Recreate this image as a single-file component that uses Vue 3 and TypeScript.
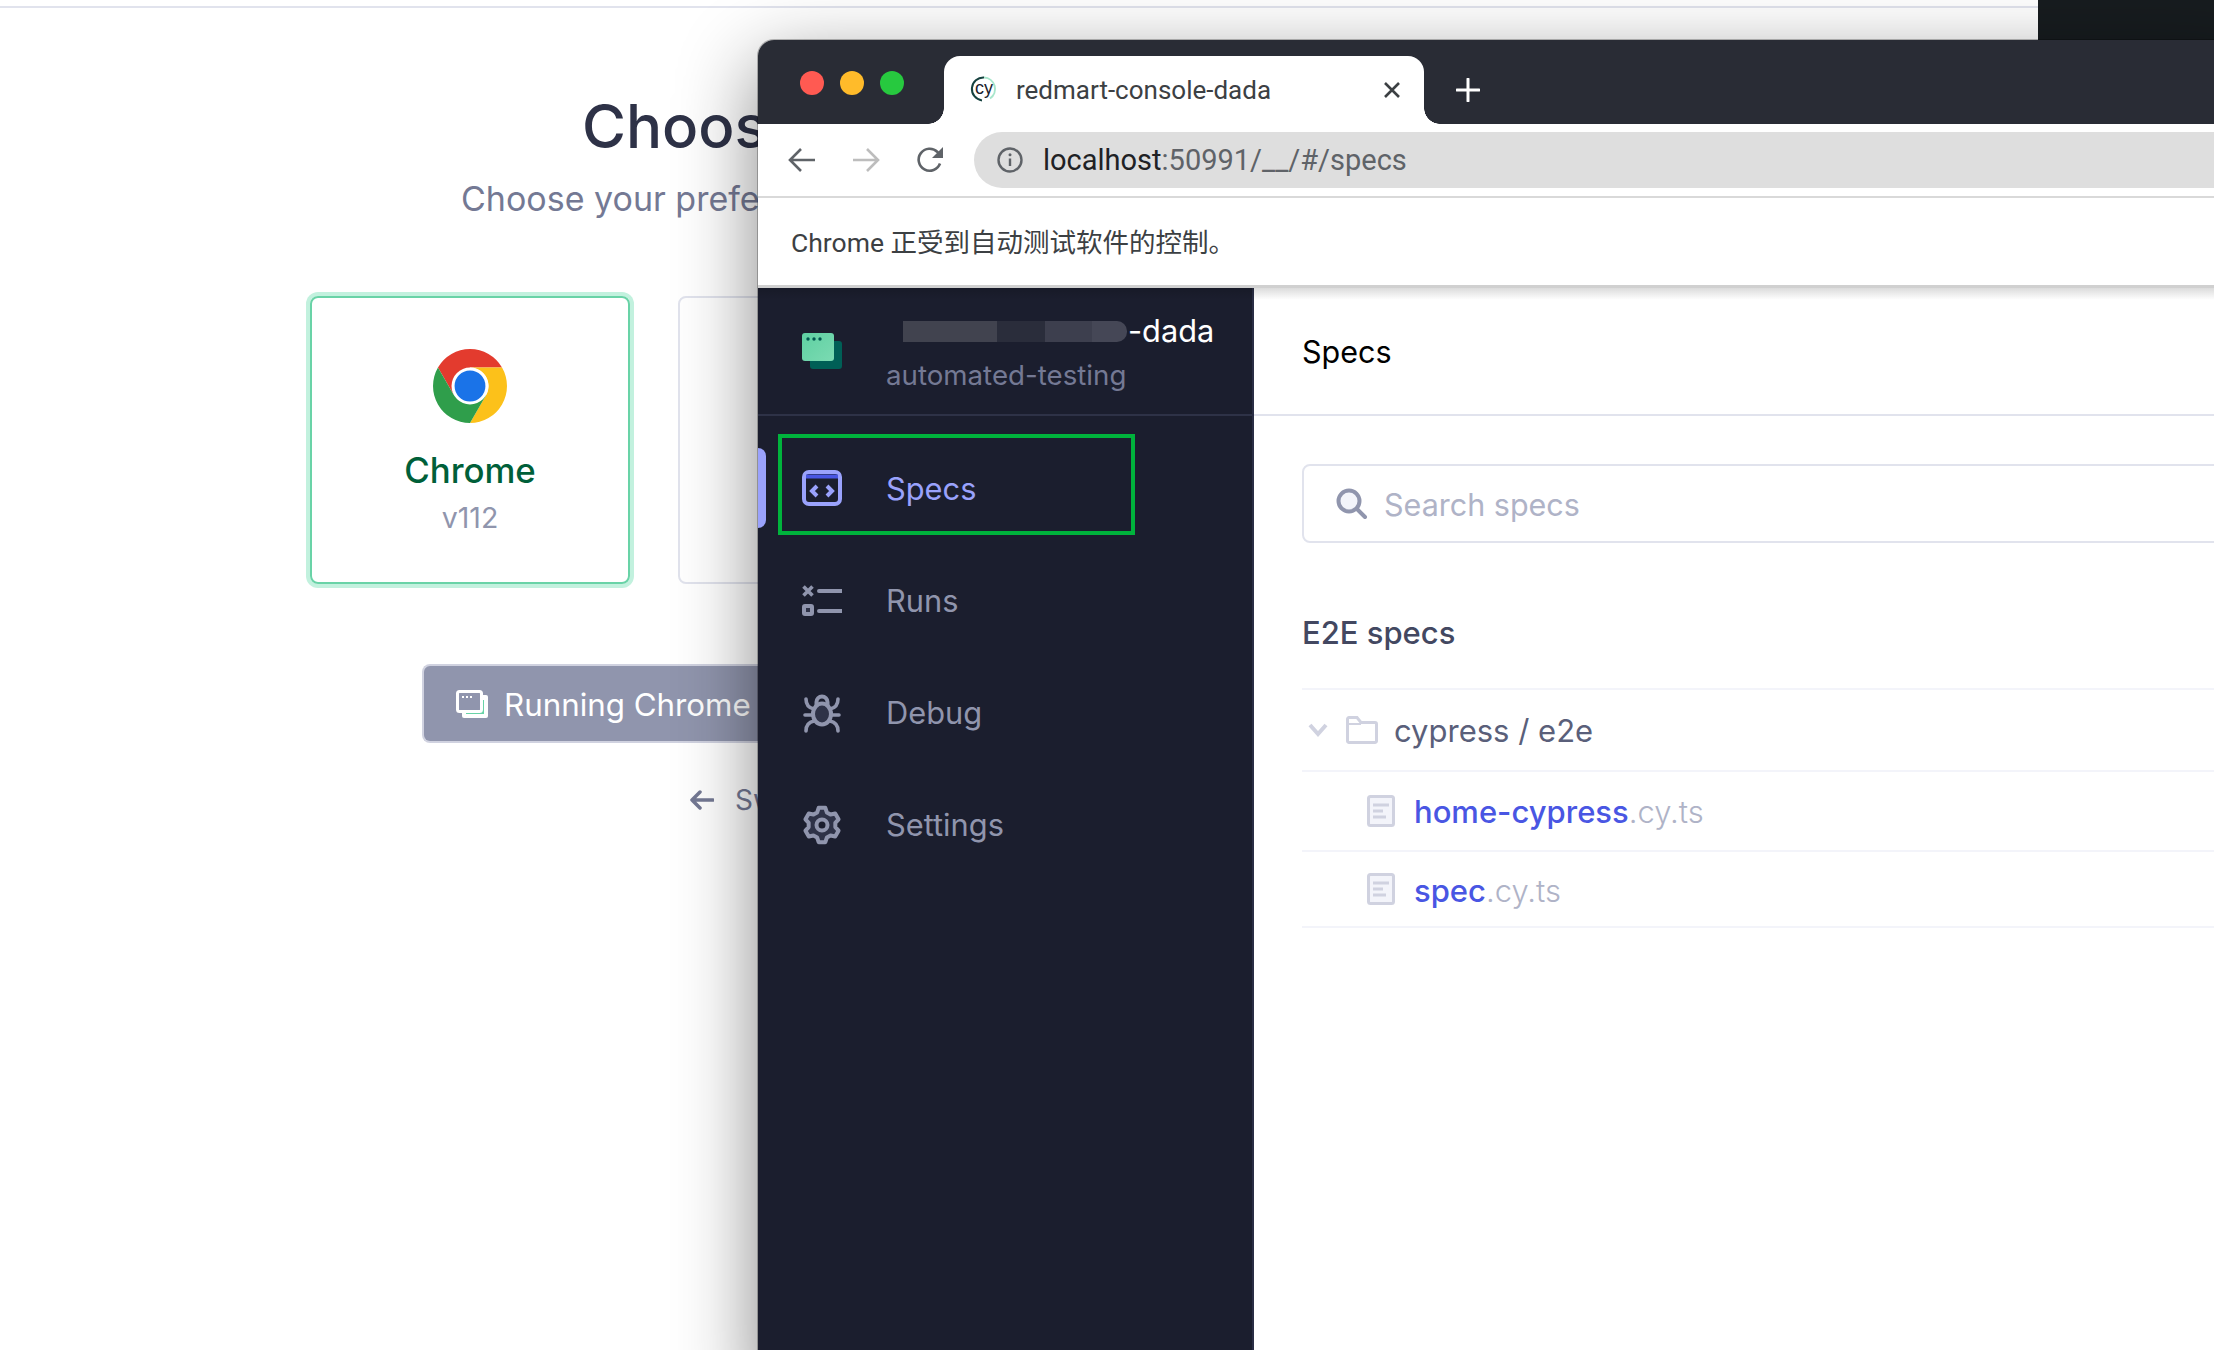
<script setup lang="ts">
const teeth = 6
const pts: string[] = []
for (let i = 0; i < teeth; i++) {
  const a = -90 + i * 60
  const p = (r: number, d: number) => {
    const t = ((a + d) * Math.PI) / 180
    return `${(20 + r * Math.cos(t)).toFixed(2)} ${(20 + r * Math.sin(t)).toFixed(2)}`
  }
  pts.push(p(13.5, -21), p(17.5, -11), p(17.5, 11), p(13.5, 21))
}
const gear = 'M' + pts.join('L') + 'Z'

const files = [
  { name: 'home-cypress', ext: '.cy.ts', cls: 'row-file-a' },
  { name: 'spec', ext: '.cy.ts', cls: 'row-file-b' },
]
</script>

<template>
  <div class="desktop">
    <section class="back">
      <div class="back-line"></div>
      <h1 class="choose">Choose a Browser</h1>
      <p class="choose-sub">Choose your preferred browser for E2E testing.</p>
      <div class="cards">
        <div class="card card-on">
          <svg class="chrome" viewBox="0 0 48 48" width="74" height="74">
            <path d="M24 0A24 24 0 0 1 44.78 12H24L13.61 30 3.22 12A24 24 0 0 1 24 0Z" fill="#e33b2e" />
            <path d="M44.78 12A24 24 0 0 1 24 48L34.39 30A12 12 0 0 0 24 12Z" fill="#fcc11a" />
            <path d="M3.22 12A24 24 0 0 0 24 48L34.39 30 13.61 30Z" fill="#2f9e4b" />
            <circle cx="24" cy="24" r="12" fill="#fff" />
            <circle cx="24" cy="24" r="10" fill="#1a73e8" />
          </svg>
          <div class="card-name">Chrome</div>
          <div class="card-ver">v112</div>
        </div>
        <div class="card"></div>
      </div>
      <div class="run-btn">
        <svg class="run-ico" width="32" height="28" viewBox="0 0 32 28">
          <rect x="6" y="5" width="26" height="23" rx="2" fill="#fff" />
          <path d="M10 23H27V10" fill="none" stroke="#69d3a7" stroke-width="2" />
          <rect x="1.500" y="1.500" width="24" height="20" rx="2" fill="#9095ad" stroke="#fff" stroke-width="3" />
          <path d="M6 7h2M10 7h2M14 7h2" stroke="#fff" stroke-width="2" />
        </svg>
        <span>Running Chrome</span>
      </div>
      <div class="switch">
        <svg class="sw-ico" width="24" height="20" viewBox="0 0 24 20"><path d="M23 10H2M10 2L2 10l8 8" fill="none" stroke="#747994" stroke-width="3.5" stroke-linecap="round" stroke-linejoin="round" /></svg>
        <span>Switch testing type</span>
      </div>
    </section>
    <div class="other-win"></div>

    <section class="win">
      <header class="tabbar">
        <div class="lights"><i class="l-r"></i><i class="l-y"></i><i class="l-g"></i></div>
        <div class="tab">
          <svg class="fav" width="28" height="30" viewBox="0 0 28 30">
            <path d="M14 2.500A11.500 11.500 0 0 1 20 23.500" fill="none" stroke="#a8e6cc" stroke-width="2" />
            <path d="M14 2.500A11.500 11.500 0 0 0 12 25.400" fill="none" stroke="#16423f" stroke-width="2" />
            <text x="14" y="19" text-anchor="middle" class="fav-t">cy</text>
          </svg>
          <span class="tab-title">redmart-console-dada</span>
          <svg class="tab-x" width="18" height="18" viewBox="0 0 18 18"><path d="M2 2l14 14M16 2L2 16" stroke="#3c4043" stroke-width="2.600" /></svg>
        </div>
        <svg class="plus" width="24" height="24" viewBox="0 0 24 24"><path d="M12 1v22M1 12h22" stroke="#fff" stroke-width="3" stroke-linecap="round" /></svg>
      </header>

      <div class="toolbar">
        <svg class="nav-b" width="28" height="26" viewBox="0 0 28 26"><path d="M27 13H2M13 2L2 13l11 11" fill="none" stroke="#5f6368" stroke-width="2.600" /></svg>
        <svg class="nav-f" width="28" height="26" viewBox="0 0 28 26"><path d="M1 13h25M15 2l11 11-11 11" fill="none" stroke="#bdbdbd" stroke-width="2.600" /></svg>
        <svg class="nav-r" width="28" height="28" viewBox="0 0 28 28"><path d="M24 17.500A11 11 0 1 1 21.500 6L25 9" fill="none" stroke="#5f6368" stroke-width="2.600" /><path d="M27 1v11H16Z" fill="#5f6368" /></svg>
        <div class="omni">
          <svg width="26" height="26" viewBox="0 0 26 26">
            <circle cx="13" cy="13" r="11.500" fill="none" stroke="#5f6368" stroke-width="2.400" />
            <path d="M13 11.500V19" stroke="#5f6368" stroke-width="2.400" />
            <circle cx="13" cy="7.800" r="1.500" fill="#5f6368" />
          </svg>
          <span class="url"><b>localhost</b>:50991/__/#/specs</span>
        </div>
      </div>

      <div class="infobar">Chrome 正受到自动测试软件的控制。</div>

      <div class="app">
        <aside class="side">
          <div class="side-head">
            <svg class="logo" width="40" height="36" viewBox="0 0 40 36">
              <rect x="8" y="8" width="32" height="28" rx="3" fill="#005f56" />
              <defs><linearGradient id="lg" x1="0" y1="0" x2="1" y2="1"><stop offset="0" stop-color="#5fd0a2" /><stop offset="1" stop-color="#7bdab2" /></linearGradient></defs>
              <rect x="0" y="0" width="32" height="28" rx="3" fill="url(#lg)" />
              <circle cx="6" cy="6" r="1.700" fill="#00594f" /><circle cx="12" cy="6" r="1.700" fill="#00594f" /><circle cx="18" cy="6" r="1.700" fill="#00594f" />
            </svg>
            <div class="proj">
              <div class="proj-title">
                <div class="mask">
                  <i class="m1"></i><i class="m2"></i><i class="m3"></i><i class="m4"></i>
                </div>
                <span class="dada">-dada</span>
              </div>
              <div class="proj-sub">automated-testing</div>
            </div>
          </div>

          <nav class="nav">
            <div class="nav-item nav-on">
              <i class="indicator"></i>
              <i class="annot"></i>
              <svg class="ico ico-specs" width="40" height="36" viewBox="0 0 40 36">
                <rect x="2" y="2" width="36" height="32" rx="5" fill="none" stroke="#9aa2fc" stroke-width="4" />
                <path d="M4 6.500H36" stroke="#4956e3" stroke-width="4" />
                <path d="M15 16l-5 5 5 5M25 16l5 5-5 5" fill="none" stroke="#9aa2fc" stroke-width="4" />
              </svg>
              <span class="nav-t">Specs</span>
            </div>
            <div class="nav-item">
              <svg class="ico" width="40" height="32" viewBox="0 0 40 32">
                <path d="M1.500 1.500l9 9M10.500 1.500l-9 9" stroke="#9095ad" stroke-width="3.600" />
                <path d="M17 6h23M17 26h23" stroke="#9095ad" stroke-width="4" stroke-linecap="round" />
                <rect x="2" y="21" width="8" height="8" rx="1" fill="#2e3247" stroke="#9095ad" stroke-width="4" />
              </svg>
              <span class="nav-t">Runs</span>
            </div>
            <div class="nav-item">
              <svg class="ico" width="40" height="40" viewBox="0 0 40 40">
                <path d="M14.500 14V9a5.500 5.500 0 0 1 11 0v5" fill="none" stroke="#9095ad" stroke-width="4" />
                <ellipse cx="20" cy="21" rx="9" ry="10.500" fill="#2e3247" stroke="#9095ad" stroke-width="4" />
                <path d="M4 6c0 6 3 9 8 10M36 6c0 6-3 9-8 10M3 22h8M37 22h-8M4 38c0-6 3-9 8-10M36 38c0-6-3-9-8-10" fill="none" stroke="#9095ad" stroke-width="3.600" stroke-linecap="round" />
              </svg>
              <span class="nav-t">Debug</span>
            </div>
            <div class="nav-item">
              <svg class="ico" width="40" height="40" viewBox="0 0 40 40">
                <path :d="gear" fill="#2e3247" stroke="#9095ad" stroke-width="4" stroke-linejoin="round" />
                <circle cx="20" cy="20" r="5.500" fill="#1b1e2e" stroke="#9095ad" stroke-width="4" />
              </svg>
              <span class="nav-t">Settings</span>
            </div>
          </nav>
        </aside>

        <main class="content">
          <div class="c-head">Specs</div>
          <div class="c-body">
            <div class="search">
              <svg width="32" height="32" viewBox="0 0 32 32">
                <circle cx="13" cy="13" r="10.500" fill="#f3f4fa" stroke="#9095ad" stroke-width="4" />
                <path d="M21 21l8 8" stroke="#9095ad" stroke-width="4" stroke-linecap="round" />
              </svg>
              <span class="search-t">Search specs</span>
            </div>
            <h2 class="e2e">E2E specs</h2>
            <div class="list">
              <div class="row row-dir">
                <svg class="chev" width="20" height="14" viewBox="0 0 20 14"><path d="M2 2l8 9 8-9" fill="none" stroke="#d0d2e0" stroke-width="4" /></svg>
                <svg class="folder" width="32" height="28" viewBox="0 0 32 28">
                  <path d="M1.500 3a1.500 1.500 0 0 1 1.500-1.500h8l4 5h14a1.500 1.500 0 0 1 1.500 1.500v17a1.500 1.500 0 0 1-1.500 1.500H3a1.500 1.500 0 0 1-1.500-1.500Z" fill="#fff" stroke="#d0d2e0" stroke-width="3" />
                  <path d="M2 8h13" stroke="#d0d2e0" stroke-width="2" />
                </svg>
                <span class="dir">cypress / e2e</span>
              </div>
              <div v-for="f in files" :key="f.name" class="row row-file" :class="f.cls">
                <svg class="file" width="28" height="32" viewBox="0 0 28 32">
                  <rect x="1.500" y="1.500" width="25" height="29" rx="2" fill="#f3f4fa" stroke="#d0d2e0" stroke-width="3" />
                  <path d="M6 10h16M6 16h10M6 22h13" stroke="#d0d2e0" stroke-width="3" />
                </svg>
                <span class="fname">{{ f.name }}<em>{{ f.ext }}</em></span>
              </div>
            </div>
          </div>
        </main>
      </div>
    </section>
  </div>
</template>

<style>
html, body { margin: 0; background: #fff; }
</style>

<style scoped>
.desktop {
  position: relative;
  width: 2214px;
  height: 1350px;
  overflow: hidden;
  background: #fff;
  font-family: Inter, "Noto Sans CJK SC", sans-serif;
}
.back {
  position: absolute;
  left: 0;
  top: 0;
  width: 2038px;
  height: 1350px;
  display: flex;
  flex-direction: column;
  white-space: nowrap;
}
.back-line { height: 2px; margin-top: 6px; background: #e1e3ed; }
.choose {
  margin: 82px 0 0 582px;
  width: 180px;
  overflow: hidden;
  font-size: 60px;
  line-height: 72px;
  font-weight: 500;
  color: #2e3247;
}
.choose-sub {
  margin: 15px 0 0 461px;
  width: 300px;
  overflow: hidden;
  font-size: 34px;
  line-height: 44px;
  color: #747994;
}
.cards { display: flex; gap: 48px; margin: 75px 0 0 310px; }
.card {
  width: 320px;
  height: 288px;
  box-sizing: border-box;
  border: 2px solid #e1e3ed;
  border-radius: 8px;
  display: flex;
  flex-direction: column;
  align-items: center;
}
.card-on { border-color: #69d3a7; box-shadow: 0 0 0 4px #c2f1de; }
.chrome { margin-top: 51px; }
.card-name { margin-top: 25px; font-size: 34.800px; line-height: 44px; font-weight: 500; color: #005f39; }
.card-ver { margin-top: 6px; font-size: 28.500px; line-height: 40px; color: #9095ad; }
.run-btn {
  margin: 80px 0 0 422px;
  width: 340px;
  height: 79px;
  box-sizing: border-box;
  border: 2px solid #d0d2e0;
  border-right: 0;
  border-radius: 8px 0 0 8px;
  background: #9095ad;
  display: flex;
  align-items: center;
  padding: 2px 0 0 32px;
  gap: 16px;
  font-size: 31.300px;
  color: #fff;
  overflow: hidden;
}
.run-ico { flex: none; margin-top: -2px; }
.run-btn span { overflow: hidden; }
.switch {
  margin: 39px 0 0 690px;
  width: 70px;
  height: 36px;
  display: flex;
  align-items: center;
  gap: 21px;
  font-size: 28px;
  color: #747994;
  overflow: hidden;
}
.sw-ico { flex: none; }
.other-win { position: absolute; left: 2038px; top: 0; width: 176px; height: 40px; background: #171c1f; }

.win {
  position: absolute;
  left: 758px;
  top: 40px;
  right: -40px;
  bottom: -40px;
  display: flex;
  flex-direction: column;
  border-radius: 16px 0 0 0;
  background: #fff;
  box-shadow: 0 24px 80px 0 rgba(0, 0, 0, 0.48), 0 0 0 1px rgba(0, 0, 0, 0.25);
}
.tabbar {
  flex: none;
  height: 84px;
  background: #292c35;
  border-radius: 16px 0 0 0;
  display: flex;
  align-items: flex-start;
}
.lights { display: flex; gap: 16px; margin: 31px 0 0 42px; width: 144px; }
.lights i { width: 24px; height: 24px; border-radius: 50%; }
.l-r { background: #ff5a52; }
.l-y { background: #ffbb2a; }
.l-g { background: #27c93f; }
.tab {
  position: relative;
  margin-top: 16px;
  width: 480px;
  height: 68px;
  box-sizing: border-box;
  background: #fff;
  border-radius: 16px 16px 0 0;
  display: flex;
  align-items: center;
  padding: 0 23px 0 26px;
}
.tab::before,
.tab::after {
  content: "";
  position: absolute;
  bottom: 0;
  width: 16px;
  height: 16px;
}
.tab::before { left: -16px; background: radial-gradient(circle at 0 0, #292c35 15.500px, #fff 16px); }
.tab::after { right: -16px; background: radial-gradient(circle at 100% 0, #292c35 15.500px, #fff 16px); }
.fav { flex: none; }
.fav-t { font: 500 18px "Liberation Sans", sans-serif; fill: #1b1e2e; }
.tab-title { margin-left: 18px; flex: 1; font: 26px Roboto, sans-serif; color: #3c4043; }
.tab-x { flex: none; }
.plus { margin: 38px 0 0 32px; }
.toolbar {
  flex: none;
  height: 74px;
  box-sizing: border-box;
  border-bottom: 2px solid #d9d9d9;
  display: flex;
  align-items: center;
  background: #fff;
}
.nav-b { margin-left: 30px; }
.nav-f { margin-left: 36px; }
.nav-r { margin-left: 36px; }
.omni {
  margin-left: 30px;
  flex: 1;
  height: 56px;
  background: #dedede;
  border-radius: 28px 0 0 28px;
  display: flex;
  align-items: center;
  padding-left: 23px;
  gap: 20px;
}
.url { font: 29px Roboto, sans-serif; color: #5f6368; white-space: nowrap; }
.url b { font-weight: 400; color: #202124; }
.infobar {
  flex: none;
  height: 90px;
  box-sizing: border-box;
  border-bottom: 3px solid #d0d0d0;
  padding: 0 0 2px 33px;
  display: flex;
  align-items: center;
  font: 26.500px Roboto, "Noto Sans CJK SC", sans-serif;
  color: #3c4043;
  background: #fff;
}
.app { flex: 1; display: flex; min-height: 0; position: relative; }
.app::before {
  content: "";
  position: absolute;
  left: 0;
  right: 0;
  top: 0;
  height: 12px;
  background: linear-gradient(rgba(0, 0, 0, 0.14), rgba(0, 0, 0, 0));
  z-index: 2;
}
.side {
  flex: none;
  width: 496px;
  box-sizing: border-box;
  background: #1b1e2e;
  border-right: 2px solid #2a2e45;
}
.side-head {
  height: 128px;
  box-sizing: border-box;
  border-bottom: 2px solid #2e3247;
  display: flex;
  align-items: flex-start;
  padding: 45px 0 0 44px;
  position: relative;
}
.logo { flex: none; }
.proj { margin-left: 45px; margin-top: -21px; white-space: nowrap; }
.proj-title {
  display: flex;
  align-items: center;
  height: 42px;
  margin-left: 16px;
  font-size: 30.700px;
  color: #fff;
}
.dada { margin: -5px 0 0 1px; }
.mask { display: flex; height: 21px; margin-top: -3px; }
.mask i { display: block; height: 100%; }
.m1 { width: 94px; background: #41434f; }
.m2 { width: 48px; background: #2a2d3b; }
.m3 { width: 47px; background: #3d3f4e; }
.m4 { width: 35px; background: #454756; border-radius: 0 10px 10px 0; }
.proj-sub { margin-top: 1px; margin-left: -1px; font-size: 27.700px; line-height: 40px; color: #747994; }
.nav { padding-top: 17px; }
.nav-item {
  position: relative;
  height: 112px;
  display: flex;
  align-items: center;
  padding-left: 44px;
  font-size: 30.800px;
  color: #9095ad;
}
.nav-t { margin-top: -2px; }
.ico { flex: none; margin-right: 44px; }
.ico-specs { margin-top: -2px; }
.nav-on { color: #9aa2fc; }
.indicator {
  position: absolute;
  left: 0;
  top: 15px;
  width: 8px;
  height: 80px;
  background: #9aa2fc;
  border-radius: 0 8px 8px 0;
}
.annot {
  position: absolute;
  left: 20px;
  top: 1px;
  width: 357px;
  height: 101px;
  box-sizing: border-box;
  border: 4px solid #00b33c;
}
.content { flex: 1; min-width: 0; background: #fff; }
.c-head {
  height: 128px;
  box-sizing: border-box;
  border-bottom: 2px solid #e1e3ed;
  padding: 1px 0 0 48px;
  display: flex;
  align-items: center;
  font-size: 30.500px;
  color: #000;
}
.c-body { padding: 48px 0 0 48px; }
.search {
  height: 79px;
  box-sizing: border-box;
  border: 2px solid #e1e3ed;
  border-radius: 8px;
  display: flex;
  align-items: center;
  padding-left: 32px;
  gap: 16px;
  font-size: 30.500px;
  color: #afb3c7;
}
.search-t { margin-top: 1px; }
.e2e {
  margin: 70px 0 35px 0;
  font-size: 31px;
  line-height: 40px;
  font-weight: 500;
  color: #434861;
}
.list { border-bottom: 2px solid #f3f4fa; }
.row {
  box-sizing: border-box;
  border-top: 2px solid #f3f4fa;
  display: flex;
  align-items: center;
  font-size: 31px;
}
.row-dir { height: 82px; padding-left: 6px; }
.row-file-a { height: 80px; padding-left: 65px; }
.row-file-b { height: 76px; padding-left: 65px; }
.folder { margin-left: 18px; }
.dir { margin-left: 16px; color: #5a5f7a; }
.fname { margin-left: 19px; font-weight: 500; color: #4956e3; }
.row-file-b .fname { margin-top: 2px; }
.fname em { font-style: normal; font-weight: 300; color: #afb3c7; }
</style>
